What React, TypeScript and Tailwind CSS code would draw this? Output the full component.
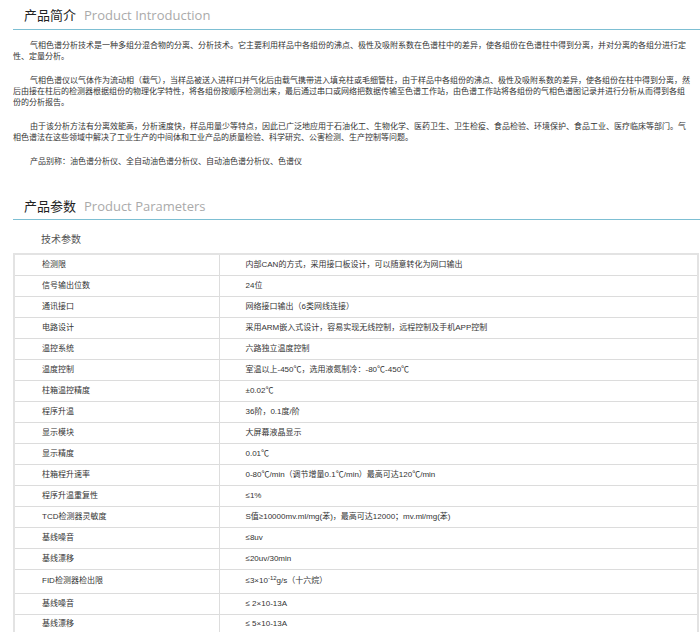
const rows: [string, React.ReactNode, number?][] = [
  ["检测限", "内部CAN的方式，采用接口板设计，可以随意转化为网口输出"],
  ["信号输出位数", "24位"],
  ["通讯接口", "网络接口输出（6类网线连接）"],
  ["电路设计", "采用ARM嵌入式设计，容易实现无线控制，远程控制及手机APP控制"],
  ["温控系统", "六路独立温度控制"],
  ["温度控制", "室温以上-450℃，选用液氮制冷：-80℃-450℃"],
  ["柱箱温控精度", "±0.02℃"],
  ["程序升温", "36阶，0.1度/阶"],
  ["显示模块", "大屏幕液晶显示"],
  ["显示精度", "0.01℃"],
  ["柱箱程升速率", "0-80℃/min（调节增量0.1℃/min）最高可达120℃/min"],
  ["程序升温重复性", "≤1%"],
  ["TCD检测器灵敏度", "S值≥10000mv.ml/mg(苯)，最高可达12000；mv.ml/mg(苯)"],
  ["基线噪音", "≤8uv"],
  ["基线漂移", "≤20uv/30min"],
  ["FID检测器检出限", <span>≤3×10<sup className="text-[6px]">-12</sup>g/s（十六烷）</span>, 24],
  ["基线噪音", "≤ 2×10-13A"],
  ["基线漂移", "≤ 5×10-13A"],
];

const font = { fontFamily: '"Liberation Sans","Noto Sans CJK SC",sans-serif' };

function Heading({ cn, en }: { cn: string; en: string }) {
  return (
    <div className="ml-[13px] border-b border-[#7dbfd3] pb-[3px] pl-[11px] flex items-baseline gap-[8px]">
      <span className="text-[13px] text-[#222]">{cn}</span>
      <span className="text-[13px] text-[#aaa]" style={{ fontFamily: '"Open Sans",sans-serif' }}>{en}</span>
    </div>
  );
}

export default function App() {
  return (
    <div className="w-[700px] h-[632px] overflow-hidden bg-white text-[#333]" style={font}>
      <div className="pt-[6px]">
        <Heading cn="产品简介" en="Product Introduction" />
      </div>
      <div className="ml-[13px] mr-[8px] mt-[10px] text-[8px] leading-[11px] flex flex-col gap-[13px]">
        <p className="indent-[17px]">气相色谱分析技术是一种多组分混合物的分离、分析技术。它主要利用样品中各组份的沸点、极性及吸附系数在色谱柱中的差异，使各组份在色谱柱中得到分离，并对分离的各组分进行定性、定量分析。</p>
        <p className="indent-[17px]">气相色谱仪以气体作为流动相（载气），当样品被送入进样口并气化后由载气携带进入填充柱或毛细管柱，由于样品中各组份的沸点、极性及吸附系数的差异，使各组份在柱中得到分离，然后由接在柱后的检测器根据组份的物理化学特性，将各组份按顺序检测出来，最后通过串口或网络把数据传输至色谱工作站，由色谱工作站将各组份的气相色谱图记录并进行分析从而得到各组份的分析报告。</p>
        <p className="indent-[17px]">由于该分析方法有分离效能高，分析速度快，样品用量少等特点，因此已广泛地应用于石油化工、生物化学、医药卫生、卫生检疫、食品检验、环境保护、食品工业、医疗临床等部门。气相色谱法在这些领域中解决了工业生产的中间体和工业产品的质量检验、科学研究、公害检测、生产控制等问题。</p>
        <p className="indent-[17px]">产品别称：油色谱分析仪、全自动油色谱分析仪、自动油色谱分析仪、色谱仪</p>
      </div>
      <div className="mt-[30px]">
        <Heading cn="产品参数" en="Product Parameters" />
      </div>
      <div className="ml-[41px] mt-[12px] text-[10px] text-[#555]">技术参数</div>
      <table className="ml-[13px] mt-[6px] w-[686px] border-collapse text-[8px] border-2 border-[#e3e3e3]">
        <tbody>
          {rows.map(([k, v, h], i) => (
            <tr key={i} style={{ height: h ?? 21 }} className="border-b border-[#dcdcdc]">
              <td className="w-[205px] pl-[27px] border-r border-[#ddd]">{k}</td>
              <td className="pl-[26px]">{v}</td>
            </tr>
          ))}
        </tbody>
      </table>
    </div>
  );
}
